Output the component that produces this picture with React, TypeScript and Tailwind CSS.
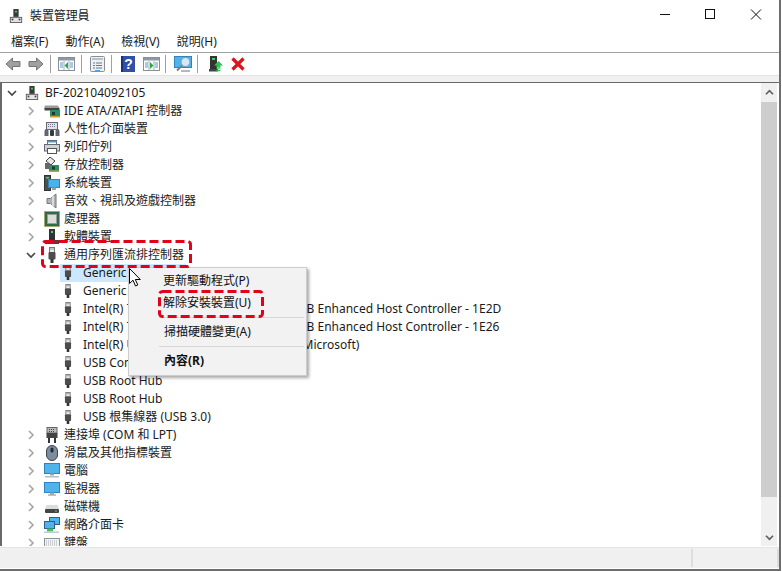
import type { ReactNode } from 'react';

const FONT = "[font-family:'Noto_Sans','Noto_Sans_CJK_TC',sans-serif]";

function Icon({ className = 'w-4 h-4', children }: { className?: string; children: ReactNode }) {
  return (
    <svg viewBox="0 0 16 16" className={`${className} shrink-0`}>
      {children}
    </svg>
  );
}

function DeviceManagerIcon({ className }: { className?: string }) {
  return (
    <Icon className={className}>
      <rect x="5" y="0" width="6" height="9" fill="#3a3a3a" />
      <rect x="7" y="2" width="2" height="2" fill="#3ddc5a" />
      <rect x="1.5" y="9.5" width="13" height="6" fill="#e4e4e4" stroke="#555" />
      <rect x="3" y="11" width="2" height="2" fill="#444" />
      <rect x="11" y="11" width="2" height="2" fill="#444" />
    </Icon>
  );
}

function UsbIcon({ className = 'w-4 h-4' }: { className?: string }) {
  return (
    <Icon className={className}>
      <rect x="5.5" y="0.5" width="5" height="5" fill="#e8e8e8" stroke="#777" />
      <rect x="6.5" y="1.5" width="1" height="1" fill="#555" />
      <rect x="8.5" y="1.5" width="1" height="1" fill="#555" />
      <rect x="4.5" y="5" width="7" height="7.5" rx="1" fill="#4d4d4d" />
      <rect x="6.5" y="12" width="3" height="4" fill="#333" />
    </Icon>
  );
}

function ToolWindow({ dir }: { dir: 'left' | 'right' }) {
  return (
    <svg viewBox="0 0 17 14" className="w-[17px] h-[14px] shrink-0">
      <rect x="0.5" y="0.5" width="16" height="13" fill="#fff" stroke="#8a8f96" />
      <rect x="1" y="1" width="15" height="2.5" fill="#8f99a5" />
      <path d="M6 4v9M11 4v9" stroke="#a5acb4" fill="none" />
      <path d="M2 6h3M2 8h3M2 10h3M12 6h3M12 8h3M12 10h3" stroke="#5f93c8" fill="none" />
      <path d={dir === 'left' ? 'M10 5v7L6.5 8.5z' : 'M7 5v7l3.5-3.5z'} fill="#1fae4a" />
    </svg>
  );
}

function NavArrow({ flip }: { flip?: boolean }) {
  return (
    <svg viewBox="0 0 16 14" className={`w-4 h-[14px] shrink-0 ${flip ? '-scale-x-100' : ''}`}>
      <path d="M7.5 1 1 7l6.5 6V9.5h7.5v-5H7.5z" fill="#a0a0a0" stroke="#767676" />
    </svg>
  );
}

function ToolSep({ className }: { className: string }) {
  return <div className={`w-px h-[18px] bg-[#a0a0a0] shrink-0 ${className}`} />;
}

function Toolbar() {
  return (
    <div className="flex items-center h-[22px] pl-[5px] bg-white border-b border-[#e3e3e3] box-content">
      <NavArrow />
      <div className="ml-[7px]">
        <NavArrow flip />
      </div>
      <ToolSep className="ml-[6px]" />
      <div className="ml-[7px]">
        <ToolWindow dir="left" />
      </div>
      <ToolSep className="ml-[6px]" />
      <svg viewBox="0 0 15 16" className="ml-[8px] w-[15px] h-4 shrink-0">
        <rect x="0.5" y="0.5" width="14" height="15" rx="1" fill="#eef1f4" stroke="#8a8f96" />
        <rect x="2" y="2" width="11" height="2" fill="#b9c0c8" />
        <path d="M3 7h2M6 7h6M3 9.5h2M6 9.5h6M3 12h2M6 12h6" stroke="#6a7a8a" fill="none" />
        <rect x="5" y="14" width="5" height="1.5" fill="#45a5e8" />
      </svg>
      <ToolSep className="ml-[6px]" />
      <svg viewBox="0 0 14 16" className="ml-[9px] w-[14px] h-4 shrink-0">
        <rect width="14" height="16" fill="#2f4fa8" />
        <rect x="0" y="0" width="2" height="16" fill="#1c3178" />
        <text x="7.5" y="13" fontSize="14" fontWeight="700" textAnchor="middle" fill="#fff" fontFamily="Liberation Sans">
          ?
        </text>
      </svg>
      <div className="ml-[8px]">
        <ToolWindow dir="right" />
      </div>
      <ToolSep className="ml-[5px]" />
      <svg viewBox="0 0 18 16" className="ml-[8px] w-[18px] h-4 shrink-0">
        <rect x="0.5" y="0.5" width="17" height="11" fill="#4fb4ec" stroke="#2f83bf" />
        <circle cx="11.5" cy="6" r="4.5" fill="#cfeafa" stroke="#8a97a3" />
        <path d="M8 9.5 3 14.5" stroke="#77808a" strokeWidth="2" />
        <path d="M7 15h9" stroke="#9aa2aa" strokeWidth="1.5" />
      </svg>
      <ToolSep className="ml-[5px]" />
      <svg viewBox="0 0 14 16" className="ml-[11px] w-[14px] h-4 shrink-0">
        <rect x="1" y="0" width="7" height="13" fill="#333" />
        <rect x="3" y="2" width="3" height="2" fill="#38d65a" />
        <rect x="0" y="13" width="9" height="2.5" fill="#444" />
        <path d="M9.5 5 14 9.5h-2.5V11h-4V9.500H5z" fill="#2fc24f" />
        <path d="M7.500 12h4M7.500 14.500h4" stroke="#2fc24f" strokeWidth="1.500" />
      </svg>
      <svg viewBox="0 0 14 14" className="ml-[8px] w-[14px] h-[14px] shrink-0">
        <path d="M1.500 1.500l11 11M12.500 1.500l-11 11" stroke="#d8141c" strokeWidth="3.200" />
      </svg>
    </div>
  );
}

function Chevron({ open }: { open?: boolean }) {
  return (
    <svg viewBox="0 0 12 12" className="w-3 h-3 shrink-0">
      {open ? (
        <path d="M2 4l4 4 4-4" fill="none" stroke="#444" strokeWidth="1.600" />
      ) : (
        <path d="M4 2l4 4-4 4" fill="none" stroke="#a6a6a6" strokeWidth="1.600" />
      )}
    </svg>
  );
}

const icons: Record<string, ReactNode> = {
  ide: (
    <Icon>
      <path d="M1 2.500h13l1.500 3H0z" fill="#9a9a9a" />
      <rect x="0.500" y="5" width="15" height="2.500" fill="#444" />
      <rect x="6" y="7" width="10" height="7" fill="#2c8c64" />
      <rect x="8" y="9" width="3" height="3" fill="#1b3b2e" />
      <rect x="6" y="13" width="10" height="1.500" fill="#c8a030" />
    </Icon>
  ),
  hid: (
    <Icon>
      <rect x="2.500" y="1.500" width="11" height="7" fill="#dfe3e8" stroke="#667" />
      <path d="M4 3.500h8M4 5.500h8" stroke="#778" strokeDasharray="1 1" />
      <path d="M0.500 15V10a2 2 0 0 1 4 0v5zM11.500 15V10a2 2 0 0 1 4 0v5z" fill="#5d6670" />
      <rect x="6" y="9" width="4" height="6" rx="1" fill="#333a44" />
    </Icon>
  ),
  printer: (
    <Icon>
      <rect x="3.500" y="1.500" width="9" height="4" fill="#fff" stroke="#667" />
      <rect x="3.500" y="2" width="9" height="1.500" fill="#3aa6e0" />
      <rect x="0.500" y="5.500" width="15" height="6.500" fill="#cfd3d8" stroke="#667" />
      <rect x="3.500" y="9.500" width="9" height="5" fill="#fff" stroke="#555" />
    </Icon>
  ),
  storage: (
    <Icon>
      <path d="M6 0l5 4-4 4-5-4z" fill="#e8e8e8" stroke="#444" />
      <rect x="1" y="6" width="5" height="6" fill="#666" />
      <rect x="5" y="8" width="10" height="6" fill="#2c8c64" />
      <rect x="8" y="9.500" width="3" height="3" fill="#1b3b2e" />
      <rect x="5" y="13.500" width="10" height="1.500" fill="#c8a030" />
    </Icon>
  ),
  system: (
    <Icon>
      <rect x="0.500" y="0.500" width="6" height="15" fill="#4b4f54" stroke="#333" />
      <rect x="2" y="2" width="3" height="1.500" fill="#3ddc5a" />
      <rect x="4.500" y="4.500" width="11" height="8" fill="#49b2ea" stroke="#2f83bf" />
      <rect x="8" y="12.500" width="4" height="2.500" fill="#8fa3b3" />
    </Icon>
  ),
  sound: (
    <Icon>
      <path d="M3 5.500h3.500L12 1v14l-5.500-4.500H3z" fill="#b0b4b8" stroke="#777" />
      <path d="M9 3v10" stroke="#e4e6e8" strokeWidth="1.500" />
    </Icon>
  ),
  cpu: (
    <Icon>
      <rect x="0.500" y="0.500" width="15" height="15" fill="#2e6a4c" stroke="#b8962e" strokeDasharray="1 1" />
      <rect x="1.500" y="1.500" width="13" height="13" fill="#2e6a4c" />
      <rect x="3.500" y="3.500" width="9" height="9" fill="#dcdcd8" stroke="#9a9a96" />
    </Icon>
  ),
  bus: (
    <Icon>
      <rect x="5" y="0" width="6" height="11" fill="#30343a" />
      <rect x="7" y="2" width="2" height="2" fill="#3ddc5a" />
      <rect x="1" y="11" width="14" height="4" fill="#444" />
    </Icon>
  ),
  usb: <UsbIcon />,
  port: (
    <Icon>
      <rect x="3" y="0.500" width="10" height="5.500" fill="#b8bcc0" stroke="#666" />
      <path d="M5 2.500h6M5 4.500h6" stroke="#444" strokeDasharray="1 1" />
      <rect x="2.500" y="6" width="11" height="5" fill="#444" />
      <path d="M5 11v5M11 11v5" stroke="#333" strokeWidth="2" />
    </Icon>
  ),
  mouse: (
    <Icon>
      <rect x="2.500" y="0.500" width="11" height="15" rx="5.500" fill="#7d8da0" stroke="#3c4550" />
      <rect x="6.500" y="2.500" width="3" height="5" rx="1.500" fill="#222a33" />
    </Icon>
  ),
  computer: (
    <Icon>
      <rect x="0.500" y="0.500" width="15" height="10" fill="#4fb4ec" stroke="#2f83bf" />
      <rect x="6" y="10.500" width="4" height="2" fill="#9aa9b5" />
      <rect x="1" y="13" width="14" height="1.500" fill="#b5bec6" />
    </Icon>
  ),
  monitor: (
    <Icon>
      <rect x="0.500" y="1.500" width="15" height="10" fill="#4fb4ec" stroke="#2f83bf" />
      <rect x="6" y="11.500" width="4" height="2" fill="#9aa9b5" />
      <rect x="4" y="13.500" width="8" height="1" fill="#7b8a97" />
    </Icon>
  ),
  disk: (
    <Icon>
      <path d="M2.500 6h11L15 10H1z" fill="#dcdcdc" />
      <rect x="1" y="10" width="14" height="4" rx="1" fill="#444" />
      <rect x="11" y="11.500" width="2" height="1" fill="#3ddc5a" />
    </Icon>
  ),
  network: (
    <Icon>
      <rect x="5.500" y="0.500" width="10" height="7" fill="#4fb4ec" stroke="#2f5f8f" />
      <rect x="0.500" y="4.500" width="10" height="7" fill="#4fb4ec" stroke="#2f5f8f" />
      <rect x="3" y="11.500" width="6" height="3" fill="#3fc25a" />
      <rect x="0" y="14.500" width="15" height="1.500" fill="#c4c9ce" />
    </Icon>
  ),
  keyboard: (
    <Icon>
      <rect x="0.500" y="3.500" width="15" height="9" fill="#f0f2f4" stroke="#8a929a" />
      <path d="M2 6h12M2 8h12M2 10h12" stroke="#a8b0b8" strokeDasharray="1 1" />
    </Icon>
  ),
};

function Group({ icon, label, open }: { icon: string; label: string; open?: boolean }) {
  return (
    <div className="flex items-center h-[18px] pl-[23px] whitespace-nowrap">
      <Chevron open={open} />
      <div className="ml-[7px]">{icons[icon]}</div>
      <span className="ml-1">{label}</span>
    </div>
  );
}

function Leaf({ label, selected }: { label: string; selected?: boolean }) {
  return (
    <div className="flex items-center h-[18px] pl-[58px] whitespace-nowrap">
      <div className={`flex items-center h-[18px] pr-[6px] ${selected ? 'bg-[#cce8ff]' : ''}`}>
        <div className="w-[23px] pl-[1px]">
          <UsbIcon className="w-[14px] h-4" />
        </div>
        <span>{label}</span>
      </div>
    </div>
  );
}

const beforeUsb = [
  ['ide', 'IDE ATA/ATAPI 控制器'],
  ['hid', '人性化介面裝置'],
  ['printer', '列印佇列'],
  ['storage', '存放控制器'],
  ['system', '系統裝置'],
  ['sound', '音效、視訊及遊戲控制器'],
  ['cpu', '處理器'],
  ['bus', '軟體裝置'],
];

const usbChildren = [
  'Generic USB Hub',
  'Intel(R) 7 Series/C216 Chipset Family USB Enhanced Host Controller - 1E2D',
  'Intel(R) 7 Series/C216 Chipset Family USB Enhanced Host Controller - 1E26',
  'Intel(R) USB 3.0 可延伸主機控制器 - 1.0 (Microsoft)',
  'USB Composite Device',
  'USB Root Hub',
  'USB Root Hub',
  'USB 根集線器 (USB 3.0)',
];

const afterUsb = [
  ['port', '連接埠 (COM 和 LPT)'],
  ['mouse', '滑鼠及其他指標裝置'],
  ['computer', '電腦'],
  ['monitor', '監視器'],
  ['disk', '磁碟機'],
  ['network', '網路介面卡'],
  ['keyboard', '鍵盤'],
];

function Scrollbar() {
  return (
    <div className="flex flex-col w-4 bg-[#f0f0f0] shrink-0">
      <div className="h-[19px] flex items-center justify-center">
        <svg viewBox="0 0 10 8" className="w-[9px] h-[7px]">
          <path d="M1 6l4-4 4 4" fill="none" stroke="#606060" strokeWidth="2" />
        </svg>
      </div>
      <div className="h-[395px] bg-[#cdcdcd]" />
      <div className="flex-1 flex items-end justify-center pb-[5px]">
        <svg viewBox="0 0 10 8" className="w-[9px] h-[7px]">
          <path d="M1 2l4 4 4-4" fill="none" stroke="#606060" strokeWidth="2" />
        </svg>
      </div>
    </div>
  );
}

function ContextMenu() {
  return (
    <div className="absolute left-[128px] top-[267px] w-[179px] h-[109px] bg-[#f2f2f2] border border-[#cccccc] shadow-[2px_2px_3px_rgba(0,0,0,0.35)] text-[#111]">
      <div className="flex items-center h-[22px] mt-[2px] pl-[34px]">更新驅動程式(P)</div>
      <div className="flex items-center h-[22px] pl-[34px]">解除安裝裝置(U)</div>
      <div className="h-px bg-[#d7d7d7] ml-[30px] mr-[2px] mt-[3px]" />
      <div className="flex items-center h-[22px] mt-[3px] pl-[35px]">掃描硬體變更(A)</div>
      <div className="h-px bg-[#d7d7d7] ml-[30px] mr-[2px] mt-[3px]" />
      <div className="flex items-center h-[22px] mt-[3px] pl-[35px] font-bold">內容(R)</div>
    </div>
  );
}

function RedBox({ className, w, h }: { className: string; w: number; h: number }) {
  return (
    <svg className={`absolute ${className}`} width={w} height={h}>
      <rect
        x="1.500"
        y="1.500"
        width={w - 3}
        height={h - 3}
        rx="3"
        fill="none"
        stroke="#e2001a"
        strokeWidth="3"
        strokeDasharray="9 4"
      />
    </svg>
  );
}

function Cursor() {
  return (
    <svg viewBox="0 0 12 19" className="absolute left-[129px] top-[268px] w-3 h-[19px]">
      <path d="M0.500 0.500v15l3.500-3.300 2.500 5.800 2.300-1-2.500-5.500h5z" fill="#fff" stroke="#000" />
    </svg>
  );
}

export default function App() {
  return (
    <div className={`relative w-[782px] h-[572px] overflow-hidden bg-white text-[12px] leading-[18px] text-[#1b1b1b] ${FONT}`}>
      <div className="w-[779px]">
        {/* Title bar */}
        <div className="flex items-center justify-between h-[30px]">
          <div className="flex items-center pl-[9px] pt-px">
            <DeviceManagerIcon className="w-[14px] h-[14px]" />
            <span className="ml-[7px] tracking-[-0.1px]">裝置管理員</span>
          </div>
          <div className="flex items-center">
            <svg width="46" height="30" viewBox="0 0 46 30">
              <path d="M19 14.500h10" stroke="#111" />
            </svg>
            <svg width="46" height="30" viewBox="0 0 46 30">
              <rect x="18.500" y="9.500" width="9" height="9" fill="none" stroke="#111" />
            </svg>
            <svg width="46" height="30" viewBox="0 0 46 30">
              <path d="M18 9.500l10 10M28 9.500l-10 10" stroke="#111" fill="none" />
            </svg>
          </div>
        </div>

        {/* Menu bar */}
        <div className="flex items-center h-[21px] pt-px pl-[11px] gap-[17px] border-b border-[#a0a0a0] box-content">
          <span>檔案(F)</span>
          <span>動作(A)</span>
          <span>檢視(V)</span>
          <span>說明(H)</span>
        </div>

        <Toolbar />
        <div className="h-[6px] bg-[#f0f0f0]" />

        {/* Tree */}
        <div className="flex h-[464px] border-t border-l-2 border-[#696969]">
          <div className="flex-1 overflow-hidden pt-px">
            <div className="flex items-center h-[18px] pl-[4px] whitespace-nowrap">
              <Chevron open />
              <div className="ml-[7px]">
                <DeviceManagerIcon className="w-[14px] h-4" />
              </div>
              <span className="ml-[6px]">BF-202104092105</span>
            </div>
            {beforeUsb.map(([icon, label]) => (
              <Group key={label} icon={icon} label={label} />
            ))}
            <Group icon="usb" label="通用序列匯流排控制器" open />
            <Leaf label="Generic USB Hub" selected />
            {usbChildren.map((label, i) => (
              <Leaf key={i} label={label} />
            ))}
            {afterUsb.map(([icon, label]) => (
              <Group key={label} icon={icon} label={label} />
            ))}
          </div>
          <Scrollbar />
          <div className="w-[2px]" />
        </div>

        {/* Status bar */}
        <div className="h-px bg-white" />
        <div className="flex h-[21px] bg-[#f0f0f0] border-t border-[#e4e4e4]">
          <div className="w-[691px]" />
          <div className="w-[2px] my-[1px] bg-[#dddddd]" />
          <div className="flex-1" />
          <div className="w-[2px] my-[1px] bg-[#dddddd]" />
        </div>
      </div>

      {/* Window frame */}
      <div className="absolute left-[779px] top-0 w-[2px] h-[571px] bg-[#6e6e6e]" />
      <div className="absolute left-0 top-[569px] w-[781px] h-[2px] bg-[#6e6e6e]" />

      <ContextMenu />
      <RedBox className="left-[41px] top-[240px]" w={151} h={28} />
      <RedBox className="left-[158px] top-[290px]" w={106} h={28} />
      <Cursor />
    </div>
  );
}
